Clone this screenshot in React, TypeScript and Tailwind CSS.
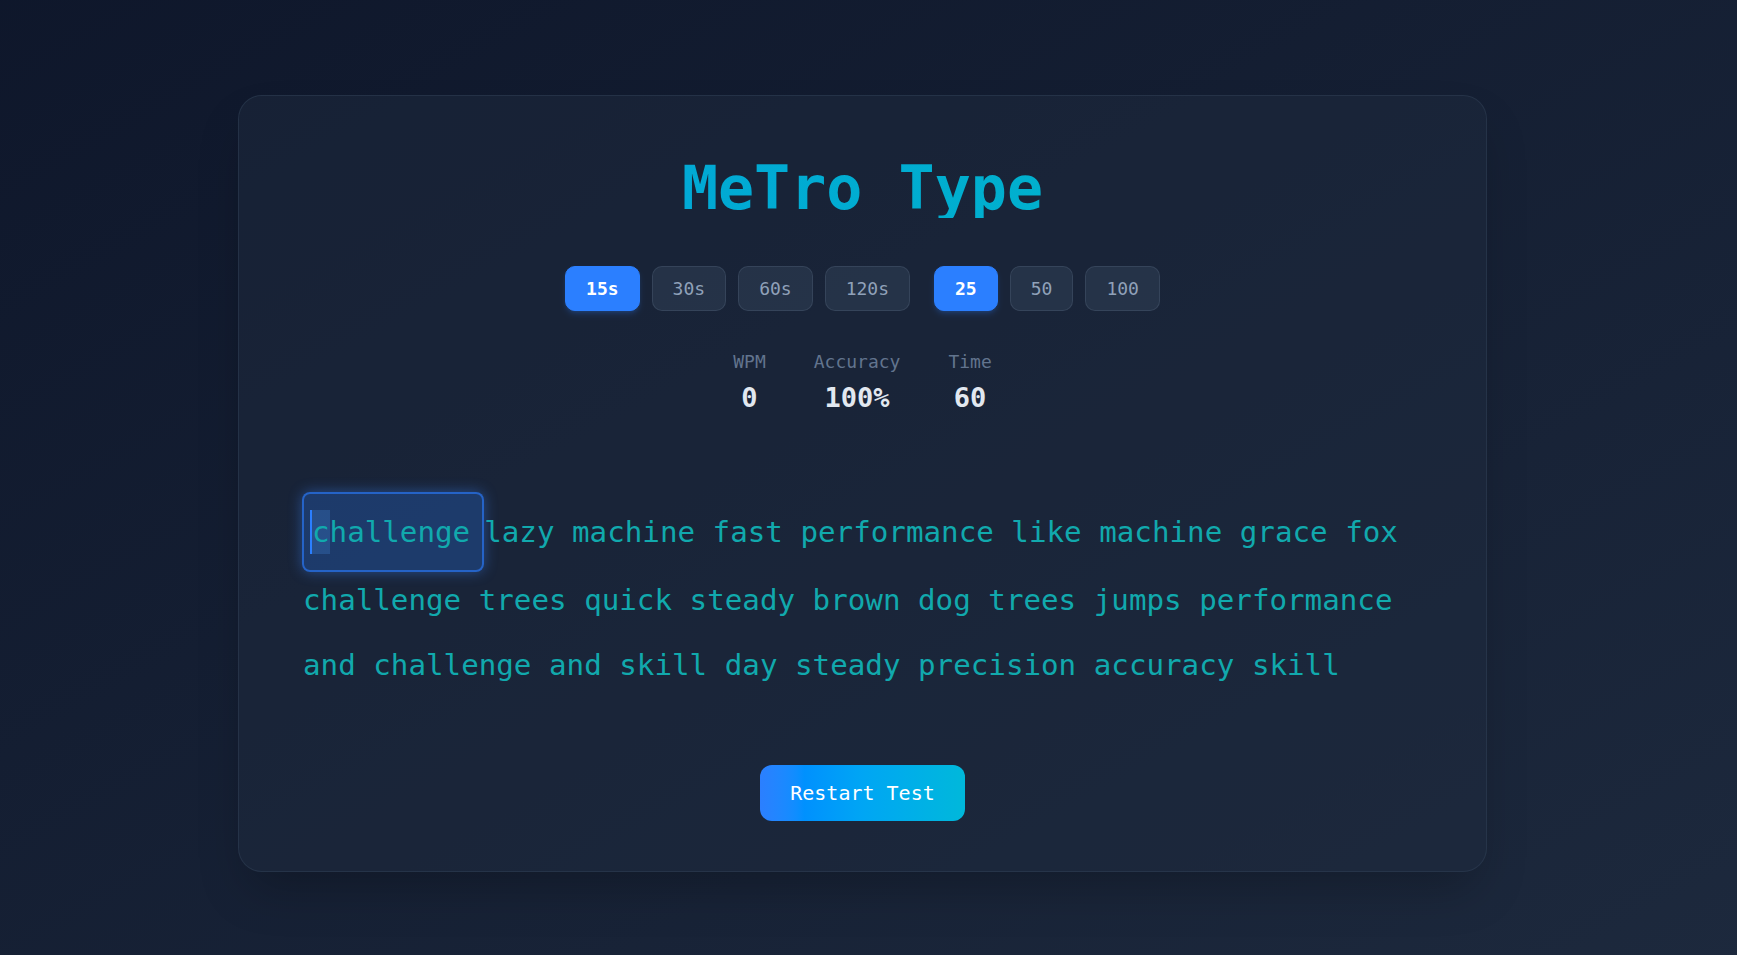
import React from 'react';

const timeOptions = ['15s', '30s', '60s', '120s'];
const wordOptions = ['25', '50', '100'];

const restWords =
  'lazy machine fast performance like machine grace fox challenge trees quick steady brown dog trees jumps performance and challenge and skill day steady precision accuracy skill';

const OptionButton: React.FC<{ label: string; active?: boolean }> = ({ label, active }) => (
  <button
    className={
      active
        ? 'rounded-[10px] border border-blue-500 bg-blue-500 px-5 py-2 text-lg leading-[27px] font-bold text-white shadow-md shadow-blue-500/20'
        : 'rounded-[10px] border border-slate-600/50 bg-slate-700/50 px-5 py-2 text-lg leading-[27px] text-slate-400'
    }
  >
    {label}
  </button>
);

const Stat: React.FC<{ label: string; value: string }> = ({ label, value }) => (
  <div className="flex flex-col items-center">
    <span className="text-lg leading-7 text-slate-500">{label}</span>
    <span className="mt-1 text-[27px] leading-9 font-bold text-slate-200">{value}</span>
  </div>
);

const App: React.FC = () => {
  return (
    <div className="min-h-screen bg-gradient-to-br from-slate-900 to-slate-800 pt-[95px] font-['DejaVu_Sans_Mono',monospace]">
      <div className="ml-[238px] w-[1249px] rounded-3xl border border-slate-700/50 bg-slate-800/50 px-16 pt-[62px] pb-[50px] shadow-2xl">
        {/* Title */}
        <h1 className="bg-gradient-to-r from-[#04a2dc] to-[#03b6c6] bg-clip-text text-center text-6xl leading-[60px] font-bold text-transparent">
          MeTro Type
        </h1>

        {/* Mode options */}
        <div className="mt-12 flex justify-center gap-6">
          <div className="flex gap-3">
            {timeOptions.map((t) => (
              <OptionButton key={t} label={t} active={t === '15s'} />
            ))}
          </div>
          <div className="flex gap-3">
            {wordOptions.map((w) => (
              <OptionButton key={w} label={w} active={w === '25'} />
            ))}
          </div>
        </div>

        {/* Stats */}
        <div className="mt-[37px] flex justify-center gap-12">
          <Stat label="WPM" value="0" />
          <Stat label="Accuracy" value="100%" />
          <Stat label="Time" value="60" />
        </div>

        {/* Words */}
        <div className="mt-[76px] text-[29.2px] leading-[65px] text-[#11a9ad]">
          <span className="-mb-1 -ml-px inline-block rounded-lg border-2 border-blue-500/60 bg-blue-500/25 py-4 pr-3 pl-1.5 leading-[44px] shadow-[0_0_14px_rgba(59,130,246,0.45)]">
            <span className="inline-block border-l-2 border-blue-500 bg-blue-400/20">c</span>hallenge
          </span>
          {restWords}
        </div>

        {/* Restart */}
        <div className="mt-[67px] flex justify-center">
          <button className="rounded-xl bg-gradient-to-r from-blue-500 via-sky-500 to-cyan-500 px-[30px] py-[14px] text-xl leading-7 font-medium text-white">
            Restart Test
          </button>
        </div>
      </div>
    </div>
  );
};

export default App;
